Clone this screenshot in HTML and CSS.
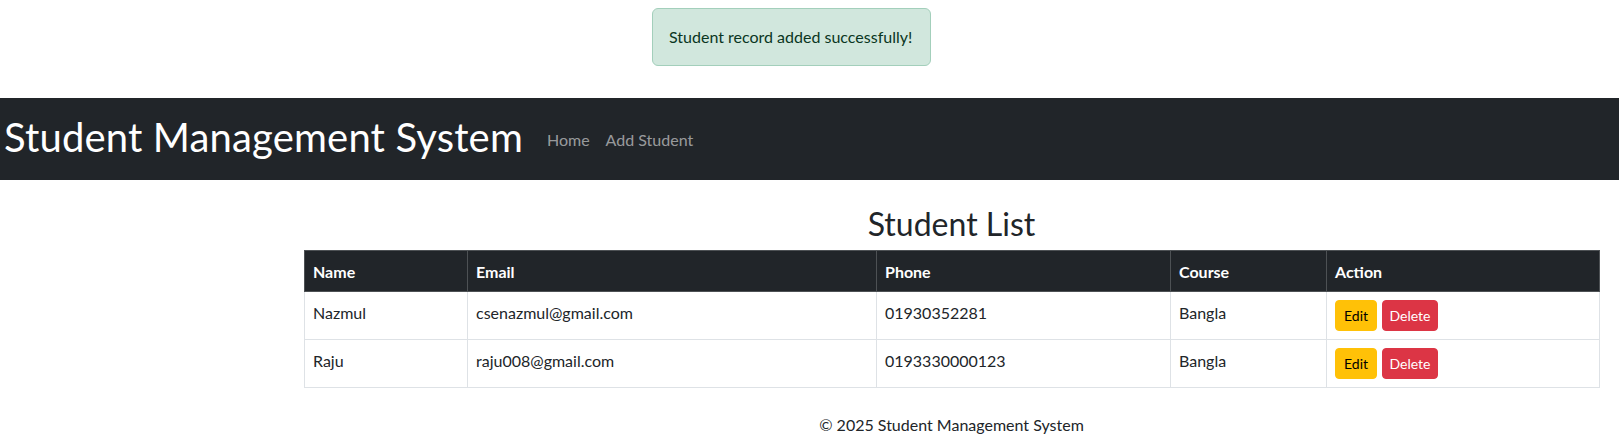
FILE: index.html
```html
<!DOCTYPE html>
<html lang="en">
<head>
<meta charset="utf-8">
<title>Student Management System</title>
<link rel="stylesheet" href="styles.css">
</head>
<body>
<div class="alert-wrap">
  <div class="alert">Student record added successfully!</div>
</div>

<nav class="navbar">
  <h1 class="brand">Student Management System</h1>
  <ul class="nav">
    <li><a class="nav-link" href="#">Home</a></li>
    <li><a class="nav-link" href="#">Add Student</a></li>
  </ul>
</nav>

<main class="container">
  <h2 class="page-title">Student List</h2>
  <table class="table">
    <thead>
      <tr>
        <th class="col-name">Name</th>
        <th class="col-email">Email</th>
        <th class="col-phone">Phone</th>
        <th class="col-course">Course</th>
        <th class="col-action">Action</th>
      </tr>
    </thead>
    <tbody>
      <tr>
        <td>Nazmul</td>
        <td>csenazmul@gmail.com</td>
        <td>01930352281</td>
        <td>Bangla</td>
        <td class="action-cell"><div class="actions"><a class="btn btn-edit" href="#">Edit</a><a class="btn btn-delete" href="#">Delete</a></div></td>
      </tr>
      <tr>
        <td>Raju</td>
        <td>raju008@gmail.com</td>
        <td>0193330000123</td>
        <td>Bangla</td>
        <td class="action-cell"><div class="actions"><a class="btn btn-edit" href="#">Edit</a><a class="btn btn-delete" href="#">Delete</a></div></td>
      </tr>
    </tbody>
  </table>
  <footer class="footer">© 2025 Student Management System</footer>
</main>
</body>
</html>
```
FILE: styles.css
```css
*, *::before, *::after { box-sizing: border-box; }

body {
  margin: 0;
  font-family: Lato, "Open Sans", sans-serif;
  font-size: 16px;
  line-height: 1.5;
  color: #212529;
  background: #fff;
}

.alert-wrap {
  display: flex;
  justify-content: center;
  padding-right: 36px;
  padding-top: 8px;
}

.alert {
  min-width: 279px;
  padding: 16px;
  border: 1px solid #a3cfbb;
  border-radius: 6px;
  background: #d1e7dd;
  color: #0a3622;
  line-height: 24px;
}

.navbar {
  margin-top: 32px;
  background: #212529;
  padding: 8px 0;
  height: 82px;
  display: flex;
  align-items: center;
}

.brand {
  margin: 0 16px 8px 0;
  padding: 7px 0 3px 4px;
  font-size: 40px;
  line-height: 48px;
  font-weight: 400;
  letter-spacing: 0.16px;
  color: #fff;
  white-space: nowrap;
}

.nav {
  list-style: none;
  margin: 0;
  padding: 0;
  display: flex;
}

.nav-link {
  display: block;
  padding: 9px 8px 7px;
  line-height: 24px;
  color: rgba(255, 255, 255, 0.55);
  text-decoration: none;
}

.container {
  width: 1295px;
  margin: 0 20px 0 auto;
}

.page-title {
  margin: 25px 0 7px;
  font-size: 32px;
  line-height: 38.4px;
  font-weight: 400;
  text-align: center;
  color: #212529;
}

.table {
  width: 1295px;
  table-layout: fixed;
  border-collapse: collapse;
  margin-bottom: 16px;
}

.col-name { width: 163px; }
.col-email { width: 409px; }
.col-phone { width: 294px; }
.col-course { width: 156px; }
.col-action { width: 273px; }

.table th {
  background: #212529;
  color: #fff;
  font-weight: 700;
  text-align: left;
  padding: 9px 8px 7px;
  line-height: 24px;
  border: 1px solid #4d5154;
}

.table td {
  padding: 9px 8px 7px;
  line-height: 24px;
  vertical-align: top;
  border: 1px solid #dee2e6;
  color: #212529;
}

.table td.action-cell {
  padding: 8px;
}

.actions {
  display: flex;
  gap: 5px;
}

.btn {
  display: inline-block;
  padding: 4px 8px;
  font-size: 14px;
  line-height: 21px;
  border: 1px solid transparent;
  border-radius: 4px;
  text-decoration: none;
}

.btn-edit {
  background: #ffc107;
  border-color: #ffc107;
  color: #000;
}

.btn-delete {
  padding: 4px 6.5px;
  background: #dc3545;
  border-color: #dc3545;
  color: #fff;
}

.footer {
  padding-top: 9px;
  text-align: center;
  line-height: 24px;
}
```
